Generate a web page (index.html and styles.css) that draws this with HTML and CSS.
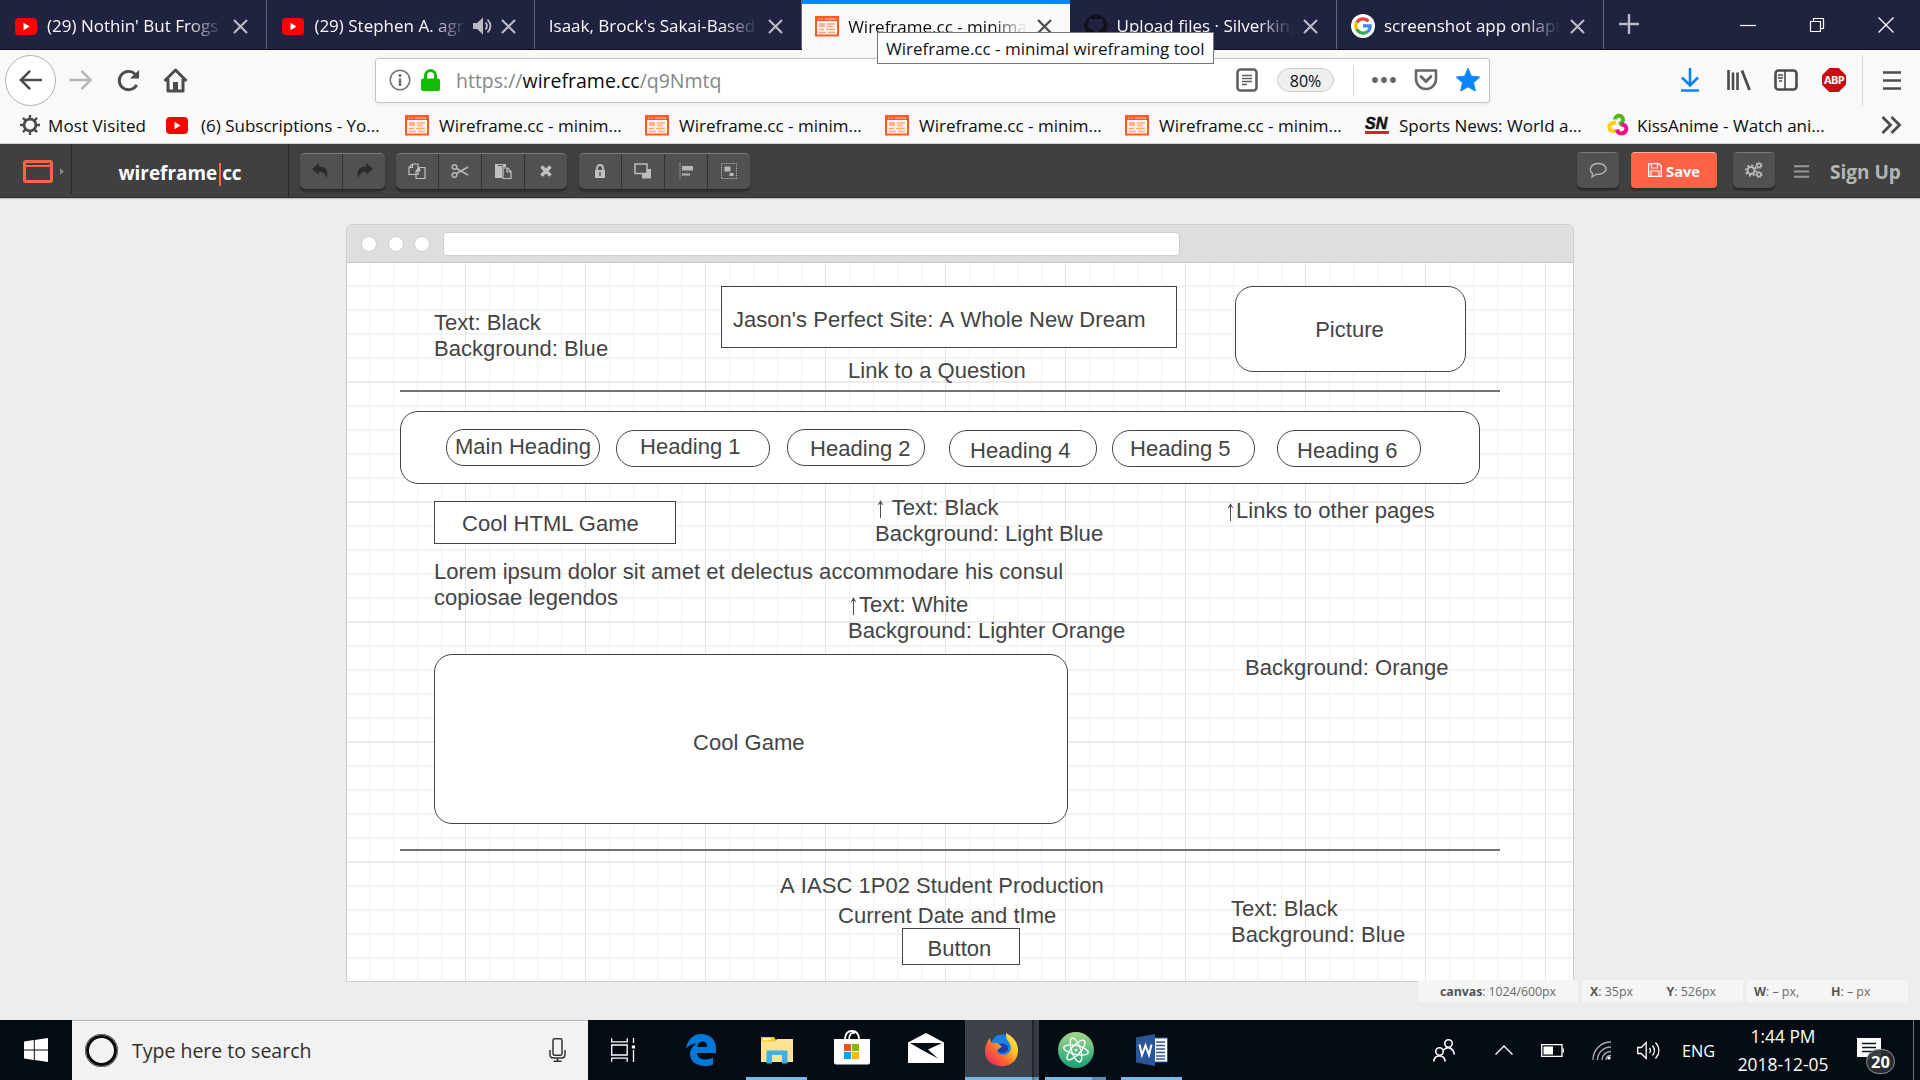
FILE: index.html
```
<!DOCTYPE html>
<html lang="en">
<head>
<meta charset="utf-8">
<title>Wireframe.cc - minimal wireframing tool</title>
<link rel="stylesheet" href="styles.css">
</head>
<body>
<svg class="defs" aria-hidden="true">
  <symbol id="yt" viewBox="0 0 22 17"><rect width="22" height="17" rx="4" fill="#f00"/><path d="M8.5 4.8v7.4l6-3.7z" fill="#fff"/></symbol>
  <symbol id="wf" viewBox="0 0 24 21"><rect x="1" y="1" width="22" height="18.5" fill="#fff3ec" stroke="#ff5a26" stroke-width="2"/><path d="M1 1h22v4H1z" fill="#ff5a26"/><path d="M3 3h1.5M6 3h1.5M10 3h11" stroke="#ffd0bd" stroke-width="1.2"/><path d="M4 7h6v4H4z" fill="#ffb293"/><path d="M12 8h8M12 10.5h6M4 13.5h5M11 13.5h9M4 16.5h7M13 16.5h7" stroke="#ffa884" stroke-width="1.6"/></symbol>
  <symbol id="x" viewBox="0 0 15 15"><path d="M1 1l13 13M14 1L1 14" fill="none" stroke="currentColor" stroke-width="2.2"/></symbol>
</svg>

<header class="tabs">
  <div class="tab"><svg class="yt"><use href="#yt"/></svg><span class="label">(29) Nothin' But Frogs</span><svg class="x"><use href="#x"/></svg></div>
  <div class="tab"><svg class="yt"><use href="#yt"/></svg><span class="label">(29) Stephen A. agr</span>
    <svg class="sound" viewBox="0 0 20 18"><path d="M0 6h4l6-5.5v17L4 12H0z" fill="#b9bac6"/><path d="M12.5 5.5q3 3.500 0 7M14.500 2.500q6 6.500 0 13" fill="none" stroke="#b9bac6" stroke-width="1.8"/></svg>
    <svg class="x"><use href="#x"/></svg></div>
  <div class="tab"><span class="label">Isaak, Brock's Sakai-Based</span><svg class="x"><use href="#x"/></svg></div>
  <div class="tab active"><svg class="wf"><use href="#wf"/></svg><span class="label">Wireframe.cc - minima</span><svg class="x"><use href="#x"/></svg></div>
  <div class="tab"><svg class="fav" viewBox="0 0 24 24"><circle cx="12" cy="12" r="11.5" fill="#10101b"/><path d="M8.500 22v-4c-3 .5-3.500-1-4.500-2M15.500 22v-4c0-1-.3-1.800-.8-2.200 3.500-.5 5-2.300 5-5.300 0-1.500-.5-2.500-1.200-3.300.2-.8.200-2-.2-3-1.300 0-2.500.8-3.300 1.400a12 12 0 0 0-6 0C7.700 5 6.500 4.200 5.200 4.200c-.4 1-.4 2.200-.2 3-.7.800-1.200 1.800-1.200 3.300 0 3 1.500 4.800 5 5.300" fill="#202340"/></svg><span class="label">Upload files · Silverking</span><svg class="x"><use href="#x"/></svg></div>
  <div class="tab"><svg class="fav" viewBox="0 0 24 24"><circle cx="12" cy="12" r="12" fill="#fff"/><g fill="none" stroke-width="3.2"><path d="M17.500 7.200A7.200 7.200 0 0 0 5.800 8.600" stroke="#ea4335"/><path d="M5.800 8.300a7.200 7.200 0 0 0 0 7.300" stroke="#fbbc05"/><path d="M5.800 15.300a7.200 7.200 0 0 0 10.800 2.300" stroke="#34a853"/><path d="M16.500 17.700q2.700-2.200 2.700-5.800H12" stroke="#4285f4"/></g></svg><span class="label">screenshot app onlapto</span><svg class="x"><use href="#x"/></svg></div>
  <svg class="newtab" viewBox="0 0 22 22"><path d="M11 1v20M1 11h20" stroke="#b9bac6" stroke-width="2.4"/></svg>
  <div class="winbtns">
    <svg viewBox="0 0 16 16"><path d="M0 8.500h16" stroke="#fff" stroke-width="1.2"/></svg>
    <svg viewBox="0 0 16 16"><path d="M1.500 4.500h10v10h-10zM4.500 4.500v-3h10v10h-3" fill="none" stroke="#fff" stroke-width="1.2"/></svg>
    <svg viewBox="0 0 16 16"><path d="M.5.5l15 15M15.500.5l-15 15" stroke="#fff" stroke-width="1.3"/></svg>
  </div>
</header>

<nav class="navbar">
  <span class="back"><svg viewBox="0 0 26 24"><path d="M25 12H2M12 2L2 12l10 10" fill="none" stroke="#4a4a4f" stroke-width="2.8"/></svg></span>
  <svg class="fwd" viewBox="0 0 26 24"><path d="M1 12h23M14 2l10 10-10 10" fill="none" stroke="#b4b4b4" stroke-width="2.6"/></svg>
  <svg class="reload" viewBox="0 0 24 24"><path d="M20.500 16.500A9.600 9.600 0 1 1 19 5.500" fill="none" stroke="#4a4a4f" stroke-width="3"/><path d="M23 1v9h-9.500z" fill="#4a4a4f"/></svg>
  <svg class="home" viewBox="0 0 25 25"><path d="M1.500 13L12.500 2l11 11M5 11v12h15V11" fill="none" stroke="#4a4a4f" stroke-width="3" stroke-linejoin="round"/><path d="M10 23v-9h5v9z" fill="#4a4a4f"/></svg>
  <div class="urlbar">
    <svg class="info" viewBox="0 0 22 22"><circle cx="11" cy="11" r="9.8" fill="none" stroke="#6b6b6b" stroke-width="1.5"/><circle cx="11" cy="6.5" r="1.5" fill="#6b6b6b"/><path d="M11 9.500V17" stroke="#6b6b6b" stroke-width="2.5"/></svg>
    <svg class="lock" viewBox="0 0 19 22"><path d="M4.500 11V6.500a5 5 0 0 1 10 0V11" fill="none" stroke="#12bc00" stroke-width="3"/><rect y="9.5" width="19" height="12.5" rx="2" fill="#12bc00"/></svg>
    <span class="url">https://<b>wireframe.cc</b>/q9Nmtq</span>
    <svg class="reader" viewBox="0 0 22 24"><rect x="1.5" y="1.5" width="19" height="21" rx="3" fill="none" stroke="#5f5f62" stroke-width="2.6"/><path d="M6 7.500h10M6 10.500h10M6 13.500h10M6 16.500h5" stroke="#5f5f62" stroke-width="1.5"/></svg>
    <span class="zoom">80%</span>
    <span class="sep"></span>
    <svg class="dots" viewBox="0 0 24 6" fill="#66666a"><circle cx="3" cy="3" r="2.9"/><circle cx="12" cy="3" r="2.9"/><circle cx="21" cy="3" r="2.9"/></svg>
    <svg class="pocket" viewBox="0 0 24 22"><path d="M2 1.500h20V10a10 10 0 0 1-20 0z" fill="none" stroke="#66666a" stroke-width="2.6" stroke-linejoin="round"/><path d="M7 7.500l5 5 5-5" fill="none" stroke="#66666a" stroke-width="2.8" stroke-linecap="round"/></svg>
    <svg class="star" viewBox="0 0 24 24"><path d="M12 .5l3.400 7.700 8.300.9-6.200 5.600 1.800 8.300-7.300-4.200L4.700 23l1.800-8.300L.3 9.100l8.300-.9z" fill="#0a84ff" stroke="#0a84ff" stroke-linejoin="round"/></svg>
  </div>
  <div class="navicons">
    <svg class="dl" viewBox="0 0 20 24"><path d="M10 0v17M2 9.500l8 8 8-8M1 22.500h18" fill="none" stroke="#0a84ff" stroke-width="2.6"/></svg>
    <svg class="lib" viewBox="0 0 24 22"><path d="M1.500 1v20M6 3.500V21M10.500 3.500V21" stroke="#4a4a4f" stroke-width="2.6"/><path d="M15 1.500L22.500 21" stroke="#4a4a4f" stroke-width="2.8"/></svg>
    <svg class="side" viewBox="0 0 24 22"><rect x="1.5" y="1.5" width="21" height="19" rx="3" fill="none" stroke="#4a4a4f" stroke-width="2.6"/><path d="M11 2v18M4 6h5M4 9h5M5 12h3" stroke="#4a4a4f" stroke-width="1.6"/></svg>
    <span class="abp">ABP</span>
    <span class="navsep"></span>
    <svg class="menu" viewBox="0 0 18 19"><path d="M0 1.500h18M0 9.500h18M0 17.500h18" stroke="#4a4a4f" stroke-width="2.7"/></svg>
  </div>
</nav>

<div class="bookmarks">
  <div class="bm most"><svg class="gear" viewBox="0 0 22 22"><circle cx="11" cy="11" r="6.5" fill="none" stroke="#4a4a4f" stroke-width="3"/><path d="M11 0v4M11 18v4M0 11h4M18 11h4M3.200 3.200L6 6M16 16l2.800 2.800M18.800 3.200L16 6M6 16l-2.800 2.800" stroke="#4a4a4f" stroke-width="2.6"/></svg><span>Most Visited</span></div>
  <div class="bm subs"><svg class="yt"><use href="#yt"/></svg><span>(6) Subscriptions - Yo...</span></div>
  <div class="bm site"><svg class="wf"><use href="#wf"/></svg><span>Wireframe.cc - minim...</span></div>
  <div class="bm site"><svg class="wf"><use href="#wf"/></svg><span>Wireframe.cc - minim...</span></div>
  <div class="bm site"><svg class="wf"><use href="#wf"/></svg><span>Wireframe.cc - minim...</span></div>
  <div class="bm site"><svg class="wf"><use href="#wf"/></svg><span>Wireframe.cc - minim...</span></div>
  <div class="bm sports"><span class="sn">SN</span><span>Sports News: World a...</span></div>
  <div class="bm kiss"><svg class="anime" viewBox="0 0 22 23" fill="none" stroke-width="4"><path d="M8 6c0-5 8-5 8 0 0 3-2 4-4 5" stroke="#52b818"/><path d="M9 9c-5 0-8 3-6 7 1 2 4 2 6 1" stroke="#ffcf0a"/><path d="M14 11c5 0 6 3 5 6-2 4-8 4-9-1" stroke="#ec1389"/></svg><span>KissAnime - Watch ani...</span></div>
  <svg class="more" viewBox="0 0 20 18"><path d="M1.500 1l8 8-8 8M10.500 1l8 8-8 8" fill="none" stroke="#4a4a4f" stroke-width="2.8"/></svg>
</div>

<div class="appbar">
  <div class="mode"><svg class="frame" viewBox="0 0 30 23"><rect x="1.5" y="1.5" width="27" height="20" rx="1.5" fill="none" stroke="#ff6347" stroke-width="3"/><path d="M1 6h28" stroke="#ff6347" stroke-width="2"/><path d="M4 3.500h1.500M7 3.500h1.500" stroke="#404040"/></svg><svg class="tri" viewBox="0 0 4 7"><path d="M0 0l4 3.500L0 7z" fill="#858585"/></svg></div>
  <div class="brand">wireframe<i></i>cc</div>
  <div class="group g1">
    <span><svg viewBox="0 0 18 16"><path d="M0 6l7-6v3.500c7 0 10 4 7.500 12C14 10.500 11 9 7 9v3z" fill="#2c2c2c"/></svg></span>
    <span><svg viewBox="0 0 18 16"><path d="M18 6l-7-6v3.500c-7 0-10 4-7.500 12C4 10.500 7 9 11 9v3z" fill="#2c2c2c"/></svg></span>
  </div>
  <div class="group g2">
    <span><svg viewBox="0 0 18 16" fill="#515151" stroke="#c2c2c2" stroke-width="1.2"><path d="M1 4.500L4.500 1H10v10.500H1zM1 4.500h3.500V1M8 8l3.500-3.500H17v11H8zM8 8h3.500V4.500"/></svg></span>
    <span><svg viewBox="0 0 18 16" fill="none" stroke="#b8b8b8" stroke-width="1.5"><circle cx="3.5" cy="4" r="2.3"/><circle cx="3.5" cy="12" r="2.3"/><path d="M5.500 5.500L17 12M5.500 10.500L17 4"/></svg></span>
    <span><svg viewBox="0 0 18 16"><path d="M1 1h11v3H8v11H1z" fill="#c2c2c2"/><path d="M4 2.500h5" stroke="#515151"/><path d="M9 5h4.500L17 8.500v7H9zM13 5v4h4" fill="#515151" stroke="#c2c2c2" stroke-width="1.2"/></svg></span>
    <span><svg viewBox="0 0 18 16"><path d="M4.500 3.500l9 9M13.500 3.500l-9 9" stroke="#c2c2c2" stroke-width="3.6"/></svg></span>
  </div>
  <div class="group g3">
    <span><svg viewBox="0 0 18 16"><path d="M6 8V5a3 3 0 0 1 6 0v3" fill="none" stroke="#c2c2c2" stroke-width="1.8"/><path d="M4 7h10v8H4z" fill="#c2c2c2"/><path d="M9 9v4" stroke="#515151" stroke-width="1.5"/></svg></span>
    <span><svg viewBox="0 0 18 16"><path d="M8 6h9v9.500H8z" fill="#bdbdbd"/><path d="M1 1h12v9.500H1z" fill="#515151" stroke="#bdbdbd" stroke-width="1.5"/></svg></span>
    <span><svg viewBox="0 0 18 16"><path d="M3 0v16" stroke="#b8b8b8" stroke-dasharray="1.2"/><path d="M5 3h11v4.500H5zM5 10.500h8v2H5z" fill="#b8b8b8"/></svg></span>
    <span><svg viewBox="0 0 18 16"><rect x="1.5" y=".5" width="15" height="15" fill="none" stroke="#b8b8b8" stroke-dasharray="1.2"/><path d="M4.500 3.500h6v5h-6zM9.500 10h4v3h-4z" fill="#b8b8b8"/></svg></span>
  </div>
  <div class="appright">
    <div class="group one"><span><svg viewBox="0 0 18 16"><path d="M3.500 11.500C-1 8 2 1.500 9 1.500s10 5 6.500 8.500c-2 2-5 2.500-8 2.200L3 15z" fill="none" stroke="#b8b8b8" stroke-width="1.3"/></svg></span></div>
    <div class="save"><svg viewBox="0 0 14 14"><path d="M.7.7h10L13.300 3v10.300H.7z" fill="none" stroke="#fff" stroke-width="1.3"/><path d="M3.500 1v4h6V1M3 13V8h8v5" fill="none" stroke="#fff" stroke-width="1.1"/></svg>Save</div>
    <div class="group one"><span><svg viewBox="0 0 18 16" fill="none" stroke="#bdbdbd"><circle cx="6" cy="8.5" r="3.5" stroke-width="2"/><circle cx="6" cy="8.5" r="5.3" stroke-width="1.6" stroke-dasharray="2 2.1"/><circle cx="14" cy="3.5" r="2" stroke-width="1.6"/><circle cx="14" cy="3.5" r="3.2" stroke-dasharray="1.4"/><circle cx="14" cy="12.5" r="2" stroke-width="1.6"/><circle cx="14" cy="12.5" r="3.2" stroke-dasharray="1.4"/></svg></span></div>
    <svg class="burger" viewBox="0 0 15 13"><path d="M0 1.200h15M0 6.500h15M0 11.800h15" stroke="#979797" stroke-width="2"/></svg>
    <span class="signup">Sign Up</span>
  </div>
</div>

<main class="stage">
  <div class="browser">
    <div class="chrome"><i></i><i></i><i></i><b></b></div>
    <div class="canvas">
      <p class="txt note-top">Text: Black<br>Background: Blue</p>
      <div class="box title"></div><p class="txt title-text">Jason's Perfect Site: A Whole New Dream</p>
      <p class="txt question">Link to a Question</p>
      <div class="box round picture">Picture</div>
      <div class="rule rule-top"></div>
      <div class="box round navbox"></div>
      <div class="box round pill p0"></div><p class="txt h0">Main Heading</p>
      <div class="box round pill p1"></div><p class="txt h1">Heading 1</p>
      <div class="box round pill p2"></div><p class="txt h2">Heading 2</p>
      <div class="box round pill p4"></div><p class="txt h4">Heading 4</p>
      <div class="box round pill p5"></div><p class="txt h5">Heading 5</p>
      <div class="box round pill p6"></div><p class="txt h6">Heading 6</p>
      <div class="box gametitle"></div><p class="txt gametitle-text">Cool HTML Game</p>
      <p class="txt note-nav"><span class="up">↑</span> Text: Black<br>Background: Light Blue</p>
      <p class="txt note-links"><span class="up">↑</span>Links to other pages</p>
      <p class="txt lorem">Lorem ipsum dolor sit amet et delectus accommodare his consul<br>copiosae legendos</p>
      <p class="txt note-white"><span class="up">↑</span>Text: White<br>Background: Lighter Orange</p>
      <div class="box round game"></div><p class="txt game-text">Cool Game</p>
      <p class="txt note-orange">Background: Orange</p>
      <div class="rule rule-bottom"></div>
      <p class="txt foot1">A IASC 1P02 Student Production</p>
      <p class="txt foot2">Current Date and tIme</p>
      <div class="box button">Button</div>
      <p class="txt note-foot">Text: Black<br>Background: Blue</p>
    </div>
  </div>
  <div class="status">
    <div class="s1"><span><b>canvas</b>: 1024/600px</span></div>
    <div class="s2"><span><b>X</b>: 35px</span><span><b>Y</b>: 526px</span></div>
    <div class="s3"><span><b>W</b>: – px,</span><span><b>H</b>: – px</span></div>
  </div>
</main>

<footer class="taskbar">
  <div class="start"><svg viewBox="0 0 24 24" fill="#fff"><path d="M0 3.400L9.800 2v9.400H0zM10.800 1.900L24 0v11.400H10.800zM0 12.400h9.800V22L0 20.600zM10.800 12.400H24V24l-13.200-1.900z"/></svg></div>
  <div class="search"><i class="cortana"></i><span>Type here to search</span><svg viewBox="0 0 17 24" fill="none" stroke="#333" stroke-width="1.5"><rect x="4" y=".8" width="9" height="16.5" rx="1.5"/><path d="M1 12v4.500q0 3.500 3.500 3.500h8q3.500 0 3.500-3.500V12M8.500 20v3M4.500 23.200h8"/></svg></div>
  <div class="apps">
    <span><svg class="i24" viewBox="0 0 24 24" fill="none" stroke="#fff" stroke-width="1.3"><path d="M.7.3v3.500h15.500V.3M.7 23.700v-3.500h15.500v3.500M.7 7h15.500v10H.7zM22.500 0v5M22.500 12v12"/><path d="M20.800 7.500h3.200v3h-3.200z" fill="#fff" stroke="none"/></svg></span>
    <span><svg class="edge" viewBox="0 0 30 32"><path d="M0 14.500C1.500 5.500 7 0 15.500 0 25 0 30 6.500 30 14.500V19H11c.3 4.500 4 6.500 8.500 6.500 3 0 5.500-.8 7.500-2v7c-2.500 1-5 1.500-8 1.500-9 0-15-5-15-12 0-4.500 2.500-8.300 7-10.500C6.500 9.500 2.500 11.500 0 14.500zM11.200 13h9.800c0-3.700-1.500-5.500-4.300-5.500S11.700 9.500 11.200 13z" fill="#0078d7"/></svg></span>
    <span class="run"><svg class="folder" viewBox="0 0 32 27"><path d="M0 0h13l2 3h15v6H0z" fill="#fbc531"/><path d="M0 4.500h14L16 2h16v23H0z" fill="#ffe394"/><path d="M2 2.300h8" stroke="#fff" stroke-width="1.8"/><path d="M5.500 26.500V13.500h21v13H21V18H11v8.500z" fill="#3fb1e8"/></svg></span>
    <span><svg class="store" viewBox="0 0 36 35"><path d="M11 10C11 3 14 1 18 1s7 2 7 9M15 10c0-5 2-8 6-7" fill="none" stroke="#fff" stroke-width="1.8"/><path d="M0 9h36v23.500q0 2-2 2H2q-2 0-2-2z" fill="#fff"/><path d="M10 14h7v7h-7z" fill="#f25022"/><path d="M18 14h7v7h-7z" fill="#7fba00"/><path d="M10 22h7v7h-7z" fill="#00a4ef"/><path d="M18 22h7v7h-7z" fill="#ffb900"/></svg></span>
    <span><svg class="mail" viewBox="0 0 36 30"><path d="M18 0l18 9.500V30H0V9.500z" fill="#fff"/><path d="M2 10h32L20 16.500l10 9L14 17z" fill="#060c14"/></svg></span>
    <span class="run current"><svg class="ff" viewBox="0 0 33 42" preserveAspectRatio="none"><defs><linearGradient id="fg" x1="1" y1="0" x2="0" y2="1"><stop offset="0" stop-color="#fff44f"/><stop offset=".35" stop-color="#ffc02a"/><stop offset=".6" stop-color="#ff6a2c"/><stop offset="1" stop-color="#e31587"/></linearGradient></defs><ellipse cx="17" cy="16" rx="11" ry="14" fill="#1583ea"/><path d="M14 14c4-3 10 0 9 6-1 5-7 6-10 3z" fill="#1d3fa8"/><path d="M5 6q0 4 2 7 3-2 6 0l4 4-5 4c0 6 6 7 10 5 6-4 4-12 1-16-2-3-2-7-2-10 8 5 12 13 12 21 0 13-7 20-16.500 20S0 34 0 23C0 15 3 10 5 6z" fill="url(#fg)"/></svg></span>
    <span class="run atomcell"><svg class="atom" viewBox="0 0 36 36"><defs><linearGradient id="ag" x1="0" y1="0" x2="0" y2="1"><stop offset="0" stop-color="#a5d68c"/><stop offset="1" stop-color="#16a077"/></linearGradient></defs><circle cx="18" cy="18" r="18" fill="url(#ag)"/><g fill="none" stroke="#fff" stroke-width="1.3" transform="rotate(12 18 18)"><ellipse cx="18" cy="18" rx="12.5" ry="4.5"/><ellipse cx="18" cy="18" rx="12.5" ry="4.5" transform="rotate(60 18 18)"/><ellipse cx="18" cy="18" rx="12.5" ry="4.5" transform="rotate(120 18 18)"/></g><circle cx="18" cy="18" r="1.5" fill="#fff"/></svg></span>
    <span class="run wordcell"><svg class="word" viewBox="0 0 32 32"><path d="M18 4h13.500v24H18z" fill="#fff" stroke="#2b579a"/><path d="M20 8h9M20 11.500h9M20 15h9M20 18.500h9M20 22h9M20 25h9" stroke="#2b579a" stroke-width="1.6"/><path d="M0 3.500L19 0v32L0 28.500z" fill="#2b579a"/><path d="M3.500 10.500l2.500 10.500 3.500-9.500 3.500 9.500L15.500 10.500" fill="none" stroke="#fff" stroke-width="2"/></svg></span>
  </div>
  <div class="tray">
    <svg class="people" viewBox="0 0 22 23" fill="none" stroke="#fff" stroke-width="1.6"><circle cx="15.5" cy="4.5" r="3.7"/><path d="M10.500 11q5-5 9.500.5l1.500 4"/><circle cx="6.5" cy="12.5" r="3.7"/><path d="M.8 22.500Q1 17 6.500 17T12 22.500"/></svg>
    <svg class="chev" viewBox="0 0 18 10"><path d="M.5 9.500L9 1l8.500 8.500" fill="none" stroke="#fff" stroke-width="1.4"/></svg>
    <svg class="batt" viewBox="0 0 23 13"><path d="M.7.700h20.300v11.600H.7z" fill="none" stroke="#fff" stroke-width="1.3"/><path d="M2.500 2.500h9.500v8H2.500zM21.500 4.500h1.500v4h-1.500z" fill="#fff"/></svg>
    <svg class="wifi" viewBox="0 0 19 19" fill="none" stroke="#a9acb0" stroke-width="1.4"><path d="M1 19C1 9 9 1 19 1M5.500 19C5.500 11.500 11.500 6 19 6M10 19c0-5 4-8.500 9-8.500M14 19q0-4.500 5-4.500"/><circle cx="17" cy="17" r="1.6" fill="#fff" stroke="none"/></svg>
    <svg class="vol" viewBox="0 0 23 19" fill="none" stroke="#fff" stroke-width="1.3"><path d="M.7 6.500h3.500l5-5v16l-5-5H.7z"/><path d="M12.500 7q2 2.500 0 5M15.500 4.500q4 5 0 10M18.500 1.500q7 8 0 16"/></svg>
    <span class="lang">ENG</span>
    <div class="clock"><span>1:44 PM</span><span>2018-12-05</span></div>
    <div class="notif"><svg viewBox="0 0 24 24"><path d="M0 0h24v19h-9l-5 5v-5H0z" fill="#fff"/><path d="M5 5.500h14M5 9.500h14M5 13.500h14" stroke="#0a1018" stroke-width="1.4"/></svg><b>20</b></div>
    <i class="desk"></i>
  </div>
</footer>

<div class="tooltip">Wireframe.cc - minimal wireframing tool</div>
</body>
</html>
```
FILE: styles.css
```
* { box-sizing: border-box; }
body {
  margin: 0;
  width: 1920px;
  height: 1080px;
  overflow: hidden;
  display: flex;
  flex-direction: column;
  background: #ededed;
  font-family: "Open Sans", "Noto Sans", sans-serif;
  font-size: 17px;
  color: #0c0c0d;
}
.defs { display: none; }
svg { display: block; flex: none; overflow: visible; }
.yt { width: 22px; height: 17px; }
.wf { width: 24px; height: 21px; }

/* tab strip */
.tabs { display: flex; flex: none; height: 50px; background: #202340; color: #f9f9fa; border-bottom: 1px solid #0e1020; }
.tab {
  display: flex; align-items: center; flex: none;
  width: 267.4px; height: 49px; padding: 3px 18px 0 15px;
  border-right: 1px solid #62647a;
}
.tab .label {
  flex: 1; min-width: 0; margin-left: 10px; padding-bottom: 1px; overflow: hidden; white-space: nowrap;
  -webkit-mask-image: linear-gradient(to left, transparent, #000 36px);
  mask-image: linear-gradient(to left, transparent, #000 36px);
}
.tab .x { width: 15px; height: 15px; margin-left: 10px; color: #b9bac6; }
.tab .sound { width: 20px; height: 18px; margin-left: 6px; }
.tab .sound + .x { margin-left: 8px; }
.tab:nth-child(3) .label { margin-left: -1px; }
.tab .fav { width: 24px; height: 24px; margin-left: -1px; }
.tab:nth-child(5) .label, .tab:nth-child(6) .label { margin-left: 9px; }
.tab.active { height: 50px; background: #f9f9fa; color: #0c0c0d; border-top: 4px solid #0a84ff; border-right: 0; padding: 0 18px 1px 13px; }
.tab.active .label { margin-left: 9px; }
.tab.active .x { color: #4a4a4f; }
.newtab { width: 22px; height: 22px; margin: 13px 0 0 14px; }
.winbtns { display: flex; gap: 53px; margin: 17px 0 0 100px; }
.winbtns svg { width: 16px; height: 16px; }

/* navigation bar */
.navbar { display: flex; align-items: center; flex: none; height: 60px; padding-left: 5px; background: #f9f9fa; }
.back { display: flex; align-items: center; justify-content: center; width: 51px; height: 51px; border: 1px solid #b1b1b3; border-radius: 50%; background: #fff; }
.back svg { width: 26px; height: 22px; }
.fwd { width: 25px; height: 22px; margin-left: 12px; }
.reload { width: 23px; height: 23px; margin-left: 24px; }
.home { width: 25px; height: 25px; margin-left: 23px; }
.urlbar { display: flex; align-items: center; width: 1115px; height: 45px; margin-left: 187px; border: 1px solid #c4c4c6; border-radius: 3px; background: #fff; box-shadow: 0 1px 4px rgba(0,0,0,.08); }
.info { width: 22px; height: 22px; margin-left: 13px; }
.lock { width: 19px; height: 22px; margin-left: 10px; }
.url { width: 780px; margin-left: 16px; font-size: 19.5px; color: #85858a; }
.url b { font-weight: 400; color: #0c0c0d; }
.reader { width: 22px; height: 24px; }
.zoom { width: 57px; height: 24px; margin-left: 19px; border: 1px solid #cfcfd1; border-radius: 12px; background: #efeff0; font-size: 16px; line-height: 24px; text-align: center; }
.sep { width: 1px; height: 31px; margin-left: 19px; background: #d7d7db; }
.dots { width: 24px; height: 6px; margin-left: 18px; }
.pocket { width: 24px; height: 22px; margin-left: 18px; }
.star { width: 24px; height: 24px; margin-left: 18px; }
.navicons { display: flex; align-items: center; margin-left: 190px; }
.dl { width: 20px; height: 24px; }
.lib { width: 24px; height: 22px; margin-left: 27px; }
.side { width: 24px; height: 22px; margin-left: 23px; }
.abp {
  width: 24px; height: 24px; margin-left: 24px; background: #c70d12; color: #fff; text-align: center;
  font: bold 11px/24px "Open Sans", sans-serif; letter-spacing: -.6px;
  clip-path: polygon(30% 0, 70% 0, 100% 30%, 100% 70%, 70% 100%, 30% 100%, 0 70%, 0 30%);
}
.navsep { width: 1px; height: 51px; margin-left: 16px; background: #d7d7db; }
.menu { width: 18px; height: 19px; margin-left: 20px; }

/* bookmarks */
.bookmarks { display: flex; align-items: center; flex: none; height: 34px; padding: 0 0 3px 20px; background: #f9f9fa; border-bottom: 1px solid #cfcfcf; }
.bm { display: flex; align-items: center; flex: none; white-space: nowrap; }
.most { width: 146px; gap: 8px; letter-spacing: .1px; }
.gear { width: 20px; height: 20px; }
.subs { width: 239px; gap: 13px; }
.site { width: 240px; gap: 10px; }
.sports { width: 242px; gap: 10px; }
.kiss { width: 274px; gap: 8px; }
.sn { width: 24px; height: 17px; border-bottom: 3px solid #d8232a; font: italic bold 16px/14px "Liberation Sans", sans-serif; -webkit-text-stroke: .5px #111; color: #111; }
.anime { width: 22px; height: 26px; }
.more { width: 20px; height: 18px; }

/* application toolbar */
.appbar { display: flex; flex: none; height: 54px; background: #404040; border-bottom: 1px solid #2f2f2f; box-shadow: 0 1px 1px #c2c2c2; }
.mode { display: flex; align-items: center; width: 72px; height: 50px; padding: 4px 0 0 23px; border-right: 1px solid #2a2a2a; }
.frame { width: 30px; height: 23px; }
.tri { width: 4px; height: 7px; margin-left: 7px; }
.brand { display: flex; align-items: center; justify-content: center; width: 217px; padding-top: 5px; border-right: 1px solid #2a2a2a; color: #fff; font-weight: 700; font-size: 18.9px; }
.brand i { width: 2px; height: 23px; margin: 2px 1px 0 2px; background: #ff6347; }
.group { display: flex; height: 36px; margin-top: 9px; border-radius: 5px; border-top: 1px solid #7c7c7c; background: #515151; box-shadow: 0 1px 1px #222, 0 3px 1px #333; }
.group span { display: flex; align-items: center; justify-content: center; width: 43px; padding-bottom: 1px; border-right: 1px solid #333; }
.group span:last-child { border-right: 0; width: 42px; }
.group svg { width: 18px; height: 16px; }
.g1 { margin-left: 11px; }
.g2 { margin-left: 11px; }
.g3 { margin-left: 12px; }
.appright { display: flex; align-items: center; margin-left: auto; padding-right: 19px; }
.appright .group { margin-top: -1px; }
.save { display: flex; align-items: center; justify-content: center; gap: 4px; width: 86px; height: 36px; margin: -1px 16px 0 12px; padding-top: 1px; border-radius: 4px; border-top: 1px solid #ffb09f; background: #ff6347; color: #fff; font-weight: 700; font-size: 14.6px; box-shadow: 0 1px 1px #333, 0 3px 1px #333; }
.save svg { width: 14px; height: 14px; margin-top: -3px; }
.burger { width: 15px; height: 13px; margin-left: 19px; margin-top: 1px; }
.signup { width: 71px; margin: 3px 0 0 21px; font-weight: 700; font-size: 19px; color: #b5b5b5; white-space: nowrap; }

/* wireframe stage */
.stage { flex: 1; padding: 26px 0 0 346px; min-height: 0; }
.browser { width: 1228px; height: 758px; border: 1px solid #ccc; border-radius: 6px 6px 0 0; background: #fff; overflow: hidden; }
.chrome { display: flex; align-items: center; height: 38px; padding-left: 14px; background: #dedede; border-bottom: 1px solid #c8c8c8; }
.chrome i { width: 16px; height: 16px; margin-right: 10.5px; border: 1px solid #d0d0d0; border-radius: 50%; background: #fff; }
.chrome b { width: 737px; height: 24px; margin-left: 2px; border: 1px solid #ccc; border-radius: 4px; background: #fff; }
.canvas {
  position: relative; height: 719px;
  background-image:
    linear-gradient(90deg, transparent 118px, #e4e4e4 118px, #e4e4e4 119px, transparent 119px),
    linear-gradient(180deg, transparent 118px, #ebebeb 118px, #ebebeb 120px, transparent 120px),
    linear-gradient(90deg, transparent 22px, #efefef 22px, #f2f2f2 23.5px, transparent 23.5px),
    linear-gradient(180deg, transparent 22px, #f4f4f4 22px, #f4f4f4 24px, transparent 24px);
  background-size: 120px 100%, 100% 120px, 24px 100%, 100% 24px;
}
/* items on the free canvas */
.txt, .box, .rule { position: absolute; margin: 0; }
.txt, .box { font: 22px/26px "Liberation Sans", Arial, sans-serif; color: #444; white-space: nowrap; letter-spacing: .03px; }
.up { display: inline-block; line-height: 20px; transform: scaleY(1.35); }
.box { border: 1px solid #444; background: #fff; text-align: center; }
.round { border-radius: 18px; }
.rule { left: 53px; width: 1100px; height: 2px; background: #727272; }
.rule-top { top: 127px; }
.rule-bottom { top: 586px; }
.note-top { left: 87px; top: 47px; }
.title { left: 374px; top: 23px; width: 456px; height: 62px; }
.title-text { left: 386px; top: 44px; font-kerning: none; }
.question { left: 501px; top: 95px; }
.picture { left: 888px; top: 23px; width: 231px; height: 86px; line-height: 86px; padding-right: 2px; }
.navbox { left: 53px; top: 148px; width: 1080px; height: 73px; }
.pill { height: 37px; top: 167px; }
.p0 { left: 99px; top: 166px; width: 154px; }
.p1 { left: 269px; width: 154px; }
.p2 { left: 440px; top: 166px; width: 138px; }
.p4 { left: 602px; width: 148px; }
.p5 { left: 765px; width: 143px; }
.p6 { left: 930px; width: 144px; }
.h0 { left: 108px; top: 171px; }
.h1 { left: 293px; top: 171px; }
.h2 { left: 463px; top: 173px; }
.h4 { left: 623px; top: 175px; }
.h5 { left: 783px; top: 173px; }
.h6 { left: 950px; top: 175px; }
.gametitle { left: 87px; top: 238px; width: 242px; height: 43px; }
.gametitle-text { left: 115px; top: 248px; }
.note-nav { left: 528px; top: 232px; }
.note-links { left: 878px; top: 235px; }
.lorem { left: 87px; top: 296px; }
.note-white { left: 501px; top: 329px; }
.game { left: 87px; top: 391px; width: 634px; height: 170px; }
.game-text { left: 346px; top: 467px; }
.note-orange { left: 898px; top: 392px; }
.foot1 { left: 433px; top: 610px; font-kerning: none; }
.foot2 { left: 491px; top: 640px; }
.button { left: 555px; top: 665px; width: 118px; height: 37px; line-height: 40px; padding-right: 3px; }
.note-foot { left: 884px; top: 633px; }

.status { display: flex; gap: 4px; width: 490px; height: 22px; margin: -2px 0 0 1072px; font-size: 12.4px; line-height: 23px; color: #6a6a6a; position: relative; white-space: nowrap; }
.status div { display: flex; background: #f5f5f5; }
.s1 { width: 160px; padding-left: 22px; letter-spacing: -.08px; }
.s2 { width: 161px; padding-left: 8px; }
.s3 { width: 161px; padding-left: 7px; }
.s2 span, .s3 span { width: 78px; }
.status b { color: #555; }

/* taskbar */
.taskbar { display: flex; flex: none; height: 60px; background: #060c14; color: #fff; }
.start { display: flex; align-items: center; width: 72px; padding-left: 24px; }
.start svg { width: 24px; height: 24px; }
.search { display: flex; align-items: center; width: 516px; padding-left: 13px; background: #f2f2f2; border-top: 1px solid #b8b8b8; color: #2e2e2e; font-size: 19.5px; }
.cortana { width: 33px; height: 33px; border: 4.5px solid #0a0a0a; border-radius: 50%; outline: 1px solid #8a8a8a; outline-offset: -1px; }
.search span { width: 417px; margin-left: 14px; }
.search svg { width: 17px; height: 24px; margin-top: -1px; }
.apps { display: flex; }
.apps span { display: flex; align-items: center; justify-content: center; position: relative; width: 75px; }
.apps span:first-child { width: 74px; padding-right: 2px; }
.apps span:nth-child(2) { width: 78px; }
.apps .run { width: 73px; background: linear-gradient(#76b9ed, #76b9ed) center bottom / 61px 3px no-repeat; }
.i24 { width: 24px; height: 24px; margin-left: -2px; }
.edge { width: 30px; height: 32px; }
.folder { width: 32px; height: 27px; }
.store { width: 36px; height: 35px; margin: -5px 0 0 3px; }
.mail { width: 36px; height: 30px; margin-top: -4px; }
.apps .current { width: 74px; margin-left: 2px; background: linear-gradient(90deg, #76b9ed 67px, #4d7ba0 67px, #4d7ba0 69px, #5f96c0 69px) left bottom / 74px 3px no-repeat, linear-gradient(90deg, #3e434b 67px, #20252d 67px, #20252d 69px, #363b43 69px); padding-right: 2px; }
.ff { width: 33px; height: 34px; }
.atom { width: 36px; height: 36px; }
.atomcell::after { content: ""; position: absolute; right: 6px; bottom: 0; width: 14px; height: 3px; background: #5a8db5; }
.apps .wordcell { margin-left: 3px; }
.word { width: 32px; height: 32px; }
.tray { display: flex; align-items: center; margin-left: auto; width: 487px; }
.people { width: 22px; height: 23px; }
.chev { width: 18px; height: 10px; margin-left: 40px; }
.batt { width: 23px; height: 13px; margin-left: 28px; }
.wifi { width: 19px; height: 19px; margin-left: 28px; }
.vol { width: 23px; height: 19px; margin-left: 26px; }
.lang { width: 34px; margin-left: 22px; padding-top: 1px; font-size: 16.3px; }
.clock { display: flex; flex-direction: column; align-items: center; width: 96px; margin-left: 19px; font-size: 17.4px; line-height: 28px; }
.notif { position: relative; width: 24px; height: 24px; margin-left: 26px; }
.notif svg { width: 24px; height: 24px; }
.notif b { position: absolute; left: 9px; top: 11px; width: 29px; height: 25px; border: 1px solid #8f9296; border-radius: 13px; background: rgba(45,48,52,.92); font-size: 16.5px; line-height: 23px; text-align: center; }
.desk { width: 1px; height: 60px; margin-left: auto; margin-right: 6px; background: #73777c; }

.tooltip { position: absolute; left: 877px; top: 32px; width: 337px; height: 32px; padding-left: 8px; border: 1px solid #767676; background: #fff; color: #111; line-height: 31px; white-space: nowrap; }
```
